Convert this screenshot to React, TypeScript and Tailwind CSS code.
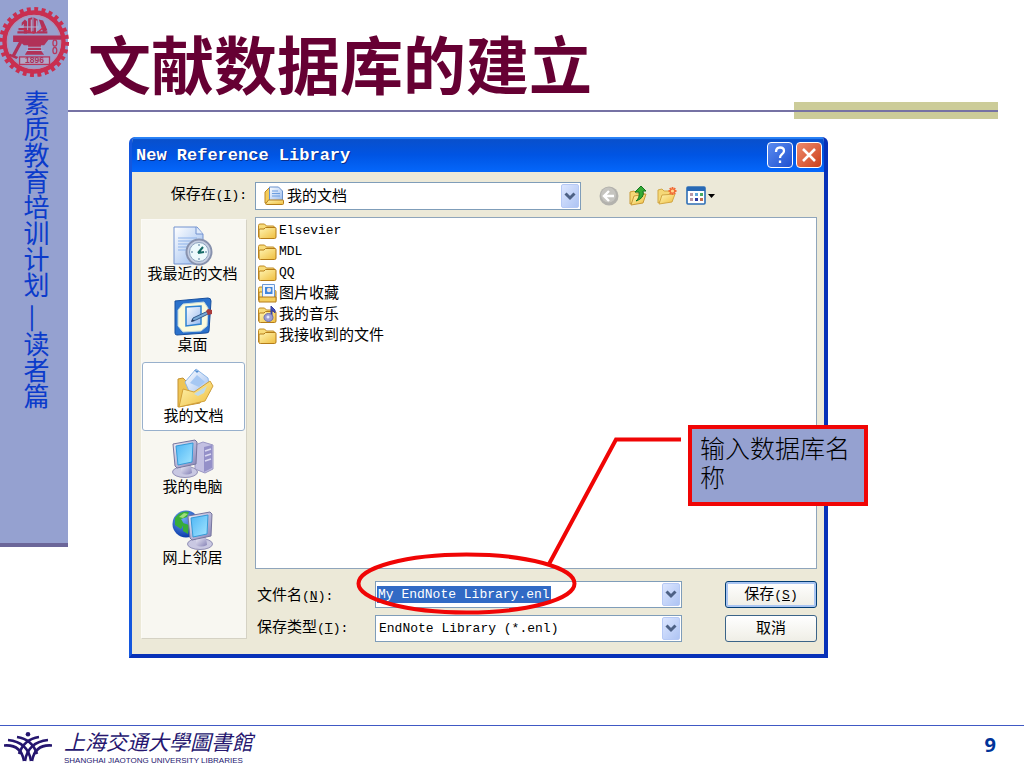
import type { ReactNode } from 'react';

const cjk = "font-['Liberation_Sans','Noto_Sans_CJK_SC',sans-serif]";
const mono = "font-['Liberation_Mono','Noto_Sans_CJK_SC',monospace]";

function Seal() {
  return (
    <svg viewBox="0 0 70 70" className="h-[70px] w-[70px]" aria-label="校徽" role="img">
      <circle cx="35" cy="35" r="33" fill="none" stroke="#c92f50" strokeWidth="4" strokeDasharray="3.9 3.505" />
      <circle cx="35" cy="35" r="29.500" fill="none" stroke="#c92f50" strokeWidth="4.400" />
      <circle cx="35" cy="35" r="26.500" fill="#98a0cd" stroke="#b98fae" strokeWidth="1" />
      <g transform="translate(-3 -2.500) scale(1.07)">
        <g fill="#b13158">
          <path d="M24 17l3-3 2 2v11h-3V18l-2 2zM30 13l4-1v14h-4zM35 12l4 2-1 12h-3zM40 14l4 1 4 9-4 2z" />
          <path d="M21 22h6v2h-6zM20 25h28v2H20z" />
          <path d="M16 29h45v4H49l-4 5h-3v5l3 4H27l3-5v-4h-4l-3-3h-7z" />
          <path d="M23 32l3 1-8 15-3-1zM13 46l8 3-2 2-7-3z" />
        </g>
        <path d="M29 40h14M28 43h17M22 21h18M33 14v12M38 15v11" stroke="#aeb0d2" strokeWidth="1" />
        <path d="M25 23l11 4M46 20l-7 6" stroke="#c92f50" strokeWidth="1.300" />
        <g fill="none" stroke="#b8365c" strokeWidth="1.200">
          <ellipse cx="55" cy="36" rx="1.800" ry="3" />
          <ellipse cx="55" cy="43" rx="1.800" ry="3" />
          <rect x="22" y="49" width="28" height="7" fill="#b3a8c8" />
        </g>
        <text x="36" y="55" textAnchor="middle" fontSize="8" fontWeight="700" fontFamily="Liberation Sans" fill="#a9345d">1896</text>
      </g>
    </svg>
  );
}

function Gradients() {
  return (
    <svg width="0" height="0" className="absolute" aria-hidden="true">
      <defs>
        <linearGradient id="folder" x1="0" y1="0" x2="1" y2="1">
          <stop offset="0" stopColor="#fff6b5" />
          <stop offset="1" stopColor="#efbd3d" />
        </linearGradient>
        <linearGradient id="paper" x1="0" y1="0" x2="1" y2="1">
          <stop offset="0" stopColor="#ffffff" />
          <stop offset="1" stopColor="#94b8ee" />
        </linearGradient>
        <linearGradient id="screen" x1="0" y1="0" x2="1" y2="1">
          <stop offset="0" stopColor="#4db5f5" />
          <stop offset="1" stopColor="#a5e6ff" />
        </linearGradient>
        <linearGradient id="metal" x1="0" y1="0" x2="1" y2="1">
          <stop offset="0" stopColor="#f0effa" />
          <stop offset="1" stopColor="#8582b6" />
        </linearGradient>
        <radialGradient id="globe" cx="0.4" cy="0.3" r="0.7">
          <stop offset="0" stopColor="#6fa8f5" />
          <stop offset="1" stopColor="#0b3cab" />
        </radialGradient>
      </defs>
    </svg>
  );
}

function FolderIcon({ children }: { children?: ReactNode }) {
  return (
    <svg viewBox="0 0 20 20" className="h-5 w-5 shrink-0" aria-hidden="true">
      <path d="M1.500 16V4.500Q1.500 3 3 3h4.500l2 2H16q1.500 0 1.500 1.500V9" fill="#f8dc7b" stroke="#c08a22" />
      <path d="M2 17V9q0-1 1-1h4l1.500-1.500H18q1 0 1 1V16q0 1.500-1.500 1.500h-14Q2 17.500 2 17z" fill="url(#folder)" stroke="#b57d19" />
      {children}
    </svg>
  );
}

function PictureFolder() {
  return (
    <FolderIcon>
      <path d="M5.500 .5h12v13h-12z" fill="#eef5ff" stroke="#6a98d6" />
      <path d="M8 3h7.500v7H8z" fill="#3f86dc" />
      <circle cx="12" cy="6" r="2.200" fill="#f0e2da" />
      <path d="M2 13h17v5H2z" fill="#f5cf5f" stroke="#b57d19" />
    </FolderIcon>
  );
}

function MusicFolder() {
  return (
    <FolderIcon>
      <path d="M14 12V1l4 4v3l-3-3v8" fill="#4451b7" stroke="#3942a0" />
      <ellipse cx="11.500" cy="12.500" rx="4.500" ry="4" fill="#9d9ed0" stroke="#6b70b0" />
      <circle cx="11" cy="12" r="1.500" fill="#e4e5fa" />
    </FolderIcon>
  );
}

function DocumentsIcon() {
  return (
    <svg viewBox="0 0 20 20" className="h-5 w-5" aria-hidden="true">
      <path d="M1 17V6l4-4h3v15z" fill="#f4cc59" stroke="#bd8722" />
      <path d="M5.500 1h9l4 4v10h-13z" fill="url(#paper)" stroke="#6991cc" />
      <path d="M8 5h6M8 7.500h8M8 10h8" stroke="#6c9ee0" />
      <path d="M1.500 18l3-4H19q.5 0 .5.700V17.500q0 1-1 1h-16z" fill="url(#folder)" stroke="#b57d19" />
    </svg>
  );
}

function RecentIcon() {
  return (
    <svg viewBox="0 0 40 40" className="h-10 w-10" aria-hidden="true">
      <path d="M1 1h23l6 7v30H1z" fill="url(#paper)" stroke="#7292cf" />
      <path d="M23 1v7h7" fill="#dfeafa" stroke="#7292cf" />
      <path d="M5 12h19M5 15h17M5 18h15M5 21h14M5 24h12" stroke="#8fb3ea" />
      <circle cx="26" cy="26" r="12.500" fill="#c5cde0" stroke="#8791ad" strokeWidth="2" />
      <circle cx="26" cy="26" r="9.500" fill="#edf9fc" stroke="#8fa3bf" />
      <path d="M25 27l5-6M25 27l6-1" stroke="#176b67" strokeWidth="2" />
      <path d="M26 18v2M26 32v2M18 26h2M32 26h2" stroke="#51789a" />
    </svg>
  );
}

function DesktopIcon() {
  return (
    <svg viewBox="0 0 40 40" className="h-10 w-10" aria-hidden="true">
      <path d="M2 4l33-3q3 0 3 3l-2 30q0 2-3 2L4 38q-2 0-2-2z" fill="#2b72cc" stroke="#174f9e" />
      <path d="M10 7l21-2 4 6-1 18-6 5-18 1-5-6V13z" fill="#fbfbdc" stroke="#bed6dd" />
      <path d="M13 10l15-1v18l-15 2z" fill="url(#paper)" stroke="#2e83d2" strokeWidth="1.500" />
      <path d="M20 21l15-7 2 2-14 7-4 1z" fill="#78aad6" stroke="#345b8c" />
      <path d="M35 12l4 1v4l-4 1-2-4z" fill="#a93b3b" />
      <path d="M19 22l3 2-4 1z" fill="#263a60" />
    </svg>
  );
}

function MyDocumentsIcon() {
  return (
    <svg viewBox="0 0 40 40" className="h-10 w-10" aria-hidden="true">
      <path d="M4 39V11l5-1 3 3 20 7-6 15z" fill="#eec455" stroke="#c39132" />
      <path d="M11 14L22 1l12 9 2 14-17 8z" fill="url(#paper)" stroke="#8eb6e6" />
      <path d="M16 15l7-8 8 7-6 5z" fill="#a6c8f3" />
      <path d="M20 2l3 3 2-2z" fill="#4e8cd1" />
      <path d="M5 39l4-18 11 3 16-11 3 5-8 15z" fill="url(#folder)" stroke="#d2a13a" />
      <path d="M20 26l13-8-3 7-6 3z" fill="#c0dbe9" />
    </svg>
  );
}

function Monitor({ x = 0, y = 0 }: { x?: number; y?: number }) {
  return (
    <g transform={`translate(${x} ${y})`}>
      <ellipse cx="13" cy="33" rx="12.500" ry="5.500" fill="#c9c8e2" stroke="#9290b5" />
      <path d="M9 26h10l1 8q-6 3-11 0z" fill="url(#metal)" />
      <path d="M1 5l22-4 2 2-1 22-19 4-2-2z" fill="url(#metal)" stroke="#77769e" />
      <path d="M4 7l17-3-1 19-14 3z" fill="url(#screen)" stroke="#359ad7" />
    </g>
  );
}

function ComputerIcon() {
  return (
    <svg viewBox="0 0 42 40" className="h-10 w-[42px]" aria-hidden="true">
      <path d="M23 6l8-3 10 3v24l-8 4-10-4z" fill="#c3c0e2" stroke="#9a97c4" />
      <path d="M32 8l8-2v23l-8 4z" fill="#9490c8" />
      <path d="M33 12l6-2M33 17l6-2M33 22l6-2" stroke="#dcdaf1" strokeWidth="1.500" />
      <Monitor />
    </svg>
  );
}

function NetworkIcon() {
  return (
    <svg viewBox="0 0 42 40" className="h-10 w-[42px]" aria-hidden="true">
      <circle cx="14" cy="14" r="13.500" fill="url(#globe)" />
      <path d="M3 8q6-8 14-6l-2 5-6 2 3 5-3 5-6-4zM11 13l6 2-1 9-5-3z" fill="#38ad39" />
      <path d="M7 7l5-4 4 1-5 4z" fill="#9fdf79" />
      <Monitor x={15} y={1} />
    </svg>
  );
}

function Arrow() {
  return (
    <svg viewBox="0 0 12 9" className="h-[9px] w-3" aria-hidden="true">
      <path d="M1.500 1.500L6 6l4.500-4.500" fill="none" stroke="#4d6185" strokeWidth="3" />
    </svg>
  );
}

const arrowBox =
  'flex w-[18px] shrink-0 items-center justify-center rounded-[2px] border border-[#b6c9f5] bg-linear-to-br from-[#dce6ff] to-[#aec4f3]';

function Picker({ id, value, icon }: { id: string; value: string; icon?: ReactNode }) {
  return (
    <div className="relative flex h-full w-full items-stretch border border-[#7f9db9] bg-white p-px">
      {icon && <span className="flex w-[30px] items-center justify-center pl-1">{icon}</span>}
      <select id={id} className={`min-w-0 flex-1 appearance-none bg-transparent text-black outline-none ${icon ? 'text-[15px]' : 'pl-[2px] text-[13px]'}`}>
        <option>{value}</option>
      </select>
      <span className={`pointer-events-none ${arrowBox}`}>
        <Arrow />
      </span>
    </div>
  );
}

function Key({ letter, colon = true }: { letter: string; colon?: boolean }) {
  return (
    <span className={`${mono} text-[13px]`}>
      (<u>{letter}</u>){colon && ':'}
    </span>
  );
}

const places = [
  { label: '我最近的文档', icon: <RecentIcon /> },
  { label: '桌面', icon: <DesktopIcon /> },
  { label: '我的文档', icon: <MyDocumentsIcon />, active: true },
  { label: '我的电脑', icon: <ComputerIcon /> },
  { label: '网上邻居', icon: <NetworkIcon /> },
];

const files = [
  { name: 'Elsevier', icon: <FolderIcon />, latin: true },
  { name: 'MDL', icon: <FolderIcon />, latin: true },
  { name: 'QQ', icon: <FolderIcon />, latin: true },
  { name: '图片收藏', icon: <PictureFolder /> },
  { name: '我的音乐', icon: <MusicFolder /> },
  { name: '我接收到的文件', icon: <FolderIcon /> },
];

function Toolbar() {
  return (
    <div className="flex items-center gap-[9px] pl-[18px]">
      <button type="button" aria-label="后退">
        <svg viewBox="0 0 20 20" className="h-5 w-5">
          <circle cx="10" cy="10" r="9.500" fill="#b3b2ad" />
          <circle cx="9.500" cy="9" r="7.500" fill="#c5c4bf" />
          <path d="M10 5l-5 5 5 5M5.500 10H15" fill="none" stroke="#fff" strokeWidth="2.400" />
        </svg>
      </button>
      <button type="button" aria-label="向上一级">
        <svg viewBox="0 0 20 20" className="h-5 w-5">
          <path d="M2 18V6l4-1 2 2h8v3z" fill="#f5d877" stroke="#c99a38" />
          <path d="M3 19l3-9 12-2-3 9z" fill="url(#folder)" stroke="#c99a38" />
          <path d="M8 15q4-3 3-9H7l6-6 5 5h-3q2 7-7 10z" fill="#35aa35" stroke="#147620" />
        </svg>
      </button>
      <button type="button" aria-label="新建文件夹">
        <svg viewBox="0 0 20 20" className="h-5 w-5">
          <path d="M1 17V4l4-1 2 2h8v3z" fill="#f5d877" stroke="#d2a744" />
          <path d="M2 18l3-9 13-1-3 8z" fill="url(#folder)" stroke="#d2a744" />
          <path d="M15.500 1v8M11.500 5h8M12.700 2.200l5.600 5.600M18.300 2.200l-5.600 5.600" stroke="#f26b35" strokeWidth="1.800" />
          <circle cx="15.500" cy="5" r="1.600" fill="#ffd68d" />
        </svg>
      </button>
      <button type="button" aria-label="查看菜单">
        <svg viewBox="0 0 29 20" className="h-5 w-[29px]">
          <rect x="1" y="1" width="18" height="17" rx="1" fill="#fff" stroke="#2c6db5" strokeWidth="1.600" />
          <path d="M1 1h18v4H1z" fill="#2869b5" />
          <path d="M4 7h3v3H4zM4 12h3v3H4z" fill="#b997a6" />
          <path d="M9 7h3v3H9z" fill="#62a8da" />
          <path d="M9 12h3v3H9z" fill="#303aa0" />
          <path d="M14 7h3v3h-3z" fill="#48a963" />
          <path d="M14 12h3v3h-3z" fill="#c16c4f" />
          <path d="M22 8h7l-3.500 4z" fill="#000" />
        </svg>
      </button>
    </div>
  );
}

function SaveDialog() {
  return (
    <section
      aria-label="New Reference Library"
      className="overflow-hidden rounded-t-[6px] border-r-4 border-b-4 border-l-[3px] border-[#0831b8] border-l-[#1457de] bg-[#ece9d8] text-[15px] text-black"
    >
      <header className="-mr-1 -ml-[3px] flex h-[35px] items-center gap-[3px] bg-linear-to-b from-[#0a4fc8] via-[#0054e3] to-[#0567fb] pr-[6px] pl-[7px] shadow-[inset_0_2px_1px_#2b83f7]">
        <h2 className={`${mono} flex-1 pt-[2px] text-[17px] leading-5 font-bold text-white [text-shadow:1px_1px_0_#0a2d8a]`}>New Reference Library</h2>
        <button type="button" aria-label="帮助" className="flex h-[26px] w-[26px] items-center justify-center rounded-[4px] border border-white bg-linear-to-br from-[#5b8bf0] to-[#1f50d0]">
          <svg viewBox="0 0 20 20" className="h-5 w-5">
            <path d="M6 7q0-4.500 4-4.500T14 6q0 2-2.300 3.500Q10 10.700 10 13M10 15.500v2.500" fill="none" stroke="#fff" strokeWidth="2.300" />
          </svg>
        </button>
        <button type="button" aria-label="关闭" className="flex h-[26px] w-[26px] items-center justify-center rounded-[4px] border border-white bg-linear-to-br from-[#ee8a6c] to-[#cc3e14]">
          <svg viewBox="0 0 20 20" className="h-5 w-5">
            <path d="M4 4l12 12M16 4L4 16" stroke="#fff" strokeWidth="2.600" />
          </svg>
        </button>
      </header>

      <form className="flex flex-col gap-[7px] pt-[10px] pr-[7px] pb-3 pl-[9px]" onSubmit={(e) => e.preventDefault()}>
        <div className="flex h-7">
          <label htmlFor="folder-select" className="w-[114px] shrink-0 pr-2 text-right leading-6 whitespace-nowrap">
            保存在<Key letter="I" />
          </label>
          <div className="max-w-[326px] flex-1">
            <Picker id="folder-select" value="我的文档" icon={<DocumentsIcon />} />
          </div>
          <Toolbar />
        </div>

        <div className="flex gap-2">
          <nav aria-label="位置" className="mt-[2px] mb-[3px] flex w-[106px] shrink-0 flex-col border border-[#fbfaf6] border-r-[#d5d2c4] border-b-[#d5d2c4] bg-[#f8f7f1] pr-px">
            {places.map((place) => (
              <button
                key={place.label}
                type="button"
                className={`flex flex-col items-center rounded-[3px] border pt-[5px] whitespace-nowrap ${
                  place.active ? 'mb-[2px] h-[69px] border-[#98b0cc] bg-white' : 'h-[71px] border-transparent pr-[2px]'
                }`}
              >
                {place.icon}
                <span className="leading-4">{place.label}</span>
              </button>
            ))}
          </nav>

          <div className="flex min-w-0 flex-1 flex-col gap-3">
            <ul className="h-[352px] border border-[#8fa5bb] bg-white pt-[2px] pl-px">
              {files.map((file) => (
                <li key={file.name} className="flex h-[21px] items-center gap-[2px]">
                  {file.icon}
                  <span className={file.latin ? `${mono} text-[13px]` : ''}>{file.name}</span>
                </li>
              ))}
            </ul>

            <div className="grid grid-cols-[118px_minmax(0,307px)_minmax(92px,1fr)] grid-rows-[27px_27px] gap-y-[7px] pl-[2px]">
              <label htmlFor="file-name" className="leading-7">
                文件名<Key letter="N" />
              </label>
              <div className="flex items-stretch border border-[#7f9db9] bg-white p-px">
                <input id="file-name" defaultValue="My EndNote Library.enl" className={`${mono} my-[3px] w-[174px] bg-[#316ac5] pl-px text-[13px] text-white outline-none`} />
                <button type="button" aria-label="显示列表" className={`ml-auto ${arrowBox}`}>
                  <Arrow />
                </button>
              </div>
              <button type="submit" className="w-[92px] justify-self-end rounded-[3px] border border-[#003c74] bg-linear-to-b from-white to-[#efeee6] whitespace-nowrap shadow-[inset_0_0_0_2px_#a9c5f2]">
                保存<Key letter="S" colon={false} />
              </button>

              <label htmlFor="file-type" className="leading-6">
                保存类型<Key letter="T" />
              </label>
              <div className={mono}>
                <Picker id="file-type" value="EndNote Library (*.enl)" />
              </div>
              <button type="button" className="w-[92px] justify-self-end rounded-[3px] border border-[#3b6488] bg-linear-to-b from-white to-[#efeee6]">
                取消
              </button>
            </div>
          </div>
        </div>
      </form>
    </section>
  );
}

function LibraryLogo() {
  return (
    <svg viewBox="0 0 48 30" className="h-[30px] w-12" aria-hidden="true">
      <g fill="none" stroke="#25166f" strokeWidth="2.600">
        <path d="M0 13.500Q17 12 20 29M4 8Q24 10 27 29M13 5Q28 7 33 22" />
        <path d="M48 13.500Q31 12 28 29M44 8Q24 10 21 29M35 5Q20 7 15 22" />
      </g>
      <circle cx="24" cy="2.300" r="2.300" fill="#25166f" />
    </svg>
  );
}

export default function App() {
  return (
    <div className={`flex min-h-screen flex-col bg-white ${cjk}`}>
      <Gradients />
      <div className="flex flex-1 items-start">
        <aside className="flex w-[68px] shrink-0 flex-col items-center border-b-4 border-[#6b6699] bg-[#95a1d0] pt-[7px] pb-[134px]">
          <Seal />
          <p className="mt-[13px] text-[26px] leading-8 text-[#0b3bcb] [writing-mode:vertical-rl]">素质教育培训计划 —读者篇</p>
        </aside>

        <main className="min-w-0 flex-1">
          <header className="mr-[26px] pt-[33px]">
            <h1 className="pl-5 text-[63px] leading-[69px] font-bold text-[#660033]">文献数据库的建立</h1>
            <div className="flex h-[17px] items-center">
              <div className="h-[2px] flex-1 bg-[#7672a4]" />
              <div className="flex h-full w-[204px] items-center bg-[#cccc99]">
                <div className="h-[2px] w-full bg-[#7672a4]" />
              </div>
            </div>
          </header>

          <div className="relative mt-[18px] ml-[61px] w-full max-w-[699px]">
            <SaveDialog />
            <svg viewBox="0 0 699 521" className="pointer-events-none absolute top-0 left-0 h-[521px] w-[699px]" aria-hidden="true">
              <ellipse cx="337.500" cy="446.500" rx="108" ry="29" fill="none" stroke="#f00505" strokeWidth="4" />
              <path d="M420 427L487 302.500H552" fill="none" stroke="#f00505" strokeWidth="4" />
            </svg>
            <p className="absolute top-[288px] left-[559px] h-[81px] w-[180px] border-4 border-[#f00505] bg-[#95a1d0] pt-[6px] pl-2 text-[25px] leading-[29px] font-light text-black">
              输入数据库名称
            </p>
          </div>
        </main>
      </div>

      <footer className="flex h-[43px] items-center border-t border-[#4059c4] pr-7 pl-1">
        <LibraryLogo />
        <div className="flex-1 pl-3 text-[#25166f]">
          <p className="text-[21px] leading-[27px] italic">上海交通大學圖書館</p>
          <p className="text-[8px] leading-[10px]">SHANGHAI JIAOTONG UNIVERSITY LIBRARIES</p>
        </div>
        <span className="pb-1 font-['Open_Sans',sans-serif] text-[20px] font-bold text-[#003399]">9</span>
      </footer>
    </div>
  );
}
